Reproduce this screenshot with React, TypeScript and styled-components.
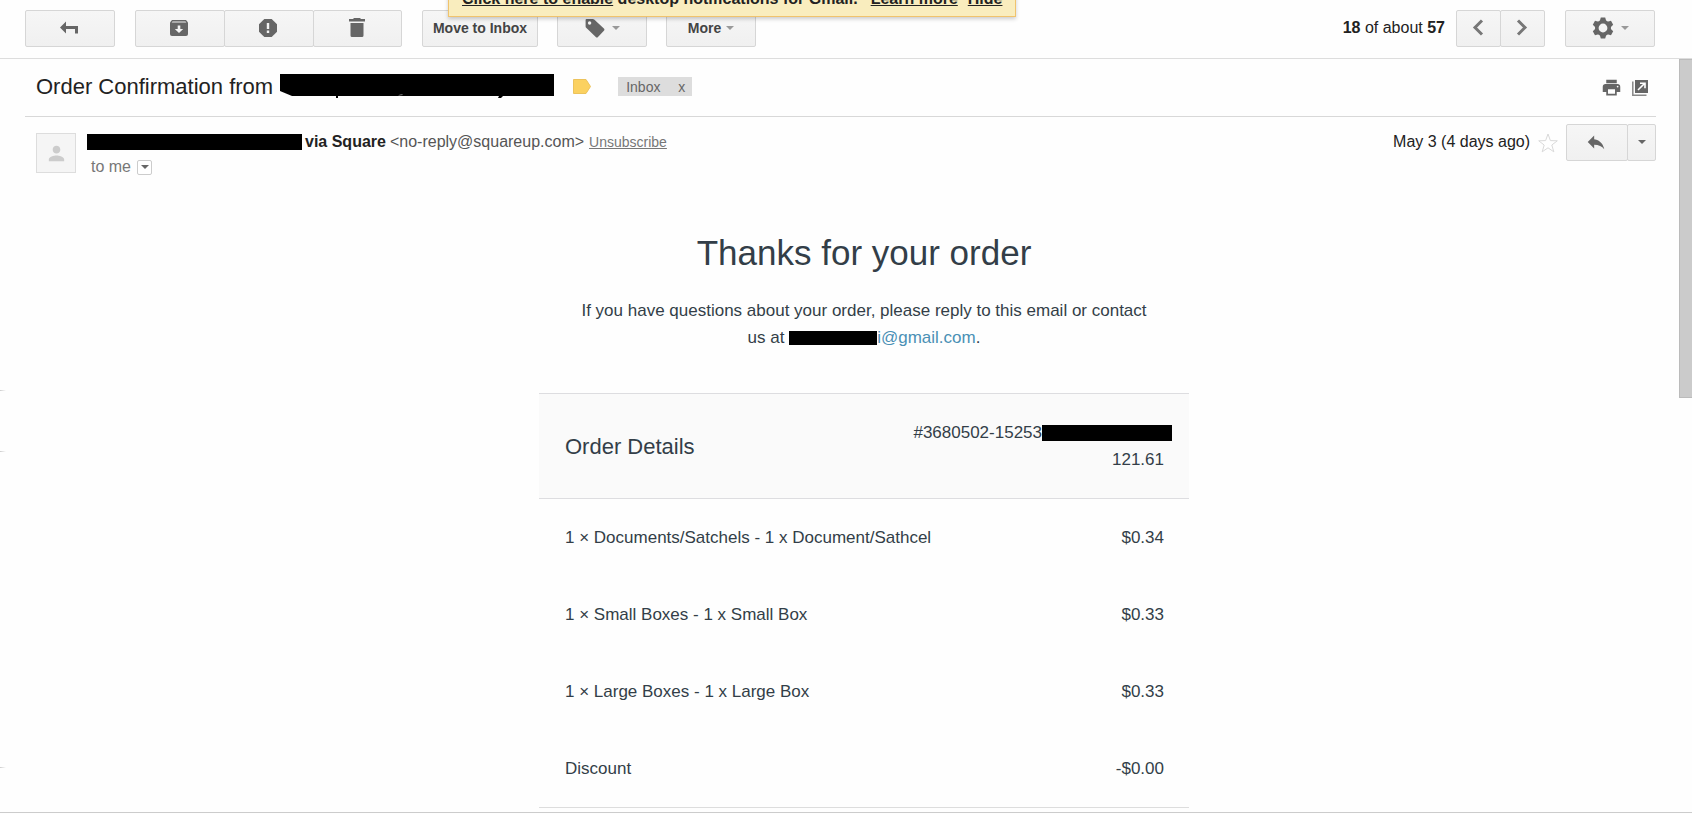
import React from "react";
import styled, { createGlobalStyle } from "styled-components";
import { MdPerson, MdPrint, MdReply } from "react-icons/md";

const GlobalStyle = createGlobalStyle`
  *, *::before, *::after { box-sizing: border-box; }
  body {
    margin: 0;
    background: #fefefe;
    color: #222;
    font-family: "Liberation Sans", Arial, sans-serif;
    font-size: 16px;
    line-height: 20px;
  }
  button { font-family: inherit; }
`;

const Page = styled.div`
  position: relative;
  display: flex;
  flex-direction: column;
  height: 100vh;
  overflow: hidden;
  padding-bottom: 1px;
`;

const Notice = styled.div`
  position: absolute;
  z-index: 2;
  top: -14px;
  left: 448px;
  display: flex;
  gap: 13px;
  padding: 2px 13px 7px;
  border: 1px solid #f0c36d;
  background: #f9edbe;
  box-shadow: 0 2px 4px rgba(0, 0, 0, 0.2);
  font-weight: bold;
  white-space: nowrap;

  a { color: #222; }
`;

const NoticeLinks = styled.span`
  display: flex;
  gap: 10px;
`;

const Toolbar = styled.header`
  display: flex;
  flex: none;
  align-items: center;
  gap: 20px;
  padding: 10px 37px 11px 25px;
  border-bottom: 1px solid #ddd;
`;

const Group = styled.div`
  display: flex;
`;

const Button = styled.button<{ $width: number }>`
  display: flex;
  align-items: center;
  justify-content: center;
  gap: 5px;
  width: ${(p) => p.$width}px;
  height: 37px;
  padding: 0 0 2px;
  border: 1px solid #d6d6d6;
  border-radius: 2px;
  background: linear-gradient(#f6f6f6, #f0f0f0);
  color: #444;
  font-size: 14px;
  font-weight: bold;
  white-space: nowrap;

  & + & {
    margin-left: -1px;
  }

  svg { flex: none; margin-right: 2px; }
`;

const Caret = styled.span<{ $dark?: boolean }>`
  border: 4px solid transparent;
  border-top-color: ${(p) => (p.$dark ? "#666" : "#999")};
  border-bottom: 0;
`;

const Pager = styled.div`
  display: flex;
  align-items: center;
  gap: 11px;
  margin-left: auto;
`;

const Position = styled.span`
  padding-bottom: 2px;
`;

const Pane = styled.div`
  position: relative;
  display: flex;
  flex: 1;
  min-height: 0;
  border-bottom: 1px solid #ccc;
`;

const Thread = styled.main`
  flex: 1;
  min-width: 0;
  overflow: hidden;
  padding: 0 23px 0 25px;
`;

const Track = styled.div`
  flex: none;
  width: 13px;
`;

const Thumb = styled.div`
  height: 45%;
  border: 1px solid #bbb;
  border-right: 0;
  background: #cbcbcb;
`;

const EdgeMark = styled.span<{ $top: string }>`
  position: absolute;
  left: 0;
  top: ${(p) => p.$top};
  width: 6px;
  height: 1px;
  background: linear-gradient(90deg, #ccc, #fefefe);
`;

const SubjectBar = styled.div`
  display: flex;
  align-items: center;
  height: 58px;
  padding: 0 8px 2px 11px;
  border-bottom: 1px solid #d8d8d8;
`;

const Subject = styled.h1`
  margin: 0 19px 0 0;
  display: flex;
  align-items: center;
  gap: 7px;
  font-size: 22px;
  line-height: 26px;
  font-weight: normal;
  white-space: nowrap;
`;

const Chip = styled.span`
  display: flex;
  align-items: center;
  justify-content: space-between;
  width: 74px;
  height: 19px;
  margin-left: 27px;
  padding: 0 7px 0 8px;
  background: #ddd;
  color: #666;
  font-size: 14px;
`;

const PlainButton = styled.button`
  display: flex;
  align-items: center;
  padding: 0;
  border: 0;
  background: none;
  color: #666;
  font-size: inherit;
`;

const SubjectTools = styled.div`
  display: flex;
  align-items: center;
  gap: 10px;
  margin-left: auto;
  padding-top: 2px;
`;

const MessageHeader = styled.div`
  display: flex;
  align-items: flex-start;
  padding: 7px 0 0 11px;
`;

const Avatar = styled.span`
  display: flex;
  align-items: center;
  justify-content: center;
  width: 40px;
  height: 40px;
  margin: 9px 11px 0 0;
  border: 1px solid #ddd;
  background: #f5f5f5;
  color: #ccc;
`;

const SenderInfo = styled.div`
  flex: 1;
  padding-top: 8px;
  white-space: nowrap;
`;

const SenderLine = styled.div`
  display: flex;
  align-items: center;
  color: #555;

  strong { margin: 0 4px 0 3px; color: #222; }
  a { margin-left: 5px; color: #777; font-size: 14px; }
`;

const Recipient = styled.div`
  display: flex;
  align-items: center;
  gap: 6px;
  padding: 5px 0 0 4px;
  color: #777;
`;

const DetailsButton = styled.button`
  display: flex;
  align-items: center;
  justify-content: center;
  width: 15px;
  height: 15px;
  padding: 0;
  border: 1px solid #ccc;
  border-radius: 2px;
  background: #fff;
`;

const MessageTools = styled.div`
  display: flex;
  align-items: center;
  gap: 8px;

  time { padding-bottom: 2px; }
`;

const Redacted = styled.span<{ $width: number; $height: number }>`
  display: inline-block;
  flex: none;
  width: ${(p) => p.$width}px;
  height: ${(p) => p.$height}px;
  background: #000;
`;

const Body = styled.article`
  padding: 0 15px 0 62px;
  color: #333e48;
  font-size: 17px;
  line-height: 27px;
`;

const Receipt = styled.div`
  max-width: 650px;
  margin: 0 auto;
`;

const Title = styled.h2`
  margin: 0;
  padding-top: 55px;
  font-size: 35px;
  line-height: 42px;
  font-weight: normal;
  text-align: center;
`;

const Contact = styled.p`
  margin: 0 auto;
  padding: 23px 0 42px;
  max-width: 582px;
  text-align: center;

  a { color: #4a90b5; text-decoration: none; }
  ${Redacted} { vertical-align: -2px; }
`;

const OrderSummary = styled.div`
  display: flex;
  align-items: center;
  justify-content: space-between;
  height: 106px;
  padding: 0 25px 0 26px;
  border: solid #dddde0;
  border-width: 1px 0;
  background: #fafafa;
  text-align: right;
`;

const SummaryTitle = styled.h3`
  margin: 0;
  font-size: 22px;
  font-weight: normal;
`;

const OrderNumber = styled.div`
  display: flex;
  align-items: center;
  justify-content: flex-end;
  margin-right: -8px;
`;

const Items = styled.table`
  width: 100%;
  border-collapse: collapse;
  border-bottom: 1px solid #ddd;

  td {
    height: 77px;
    padding: 0 25px 0 26px;
  }
  td:last-child { text-align: right; }
`;

const items = [
  ["1 × Documents/Satchels - 1 x Document/Sathcel", "$0.34"],
  ["1 × Small Boxes - 1 x Small Box", "$0.33"],
  ["1 × Large Boxes - 1 x Large Box", "$0.33"],
  ["Discount", "-$0.00"],
];

const BackIcon = () => (
  <svg width="18" height="14" viewBox="0 0 18 14" fill="#666">
    <path d="M0 6.5 6 0.5V5h12v7.5h-3V8H6v4.5z" />
  </svg>
);

const ArchiveIcon = () => (
  <svg width="18" height="16" viewBox="0 0 18 16">
    <path d="M2 0h14l2 2.5V14a2 2 0 0 1-2 2H2a2 2 0 0 1-2-2V2.5z" fill="#666" />
    <path d="M2.5 1.5h13l.8 1H1.7z" fill="#eee" />
    <path d="M7.7 5.5h2.6V9h2.9L9 13 4.800 9h2.900z" fill="#f4f4f4" />
  </svg>
);

const SpamIcon = () => (
  <svg width="18" height="18" viewBox="0 0 18 18">
    <path d="M5.300 0h7.400L18 5.300v7.400L12.700 18H5.300L0 12.700V5.300z" fill="#666" />
    <path d="M7.800 4h2.400v6H7.800zM7.800 11.500h2.400v2.400H7.800z" fill="#f4f4f4" />
  </svg>
);

const TrashIcon = () => (
  <svg width="16" height="19" viewBox="0 0 16 19" fill="#666">
    <path d="M5 0h6l1 1h4v2.500H0V1h4zM1.500 5h13v12.500a1.500 1.500 0 0 1-1.500 1.500H3a1.500 1.500 0 0 1-1.500-1.500z" />
  </svg>
);

const TagIcon = () => (
  <svg width="20" height="20" viewBox="0 0 20 20">
    <path d="M1.500 1h6.300c.6 0 1 .2 1.400.6l9.700 9c.7.700.7 1.500 0 2.200L13 18.900c-.7.7-1.500.7-2.200 0L1.200 9.800C.8 9.400.6 9 .6 8.400V2c0-.6.3-1 .9-1z" fill="#666" />
    <circle cx="4.600" cy="5" r="1.700" fill="#f4f4f4" />
  </svg>
);

const ChevronIcon = ({ next }: { next?: boolean }) => (
  <svg width="12" height="17" viewBox="0 0 12 17" fill="none" stroke="#777" strokeWidth="3">
    <path d={next ? "M2 1.500 9 8.500 2 15.500" : "M10 1.500 3 8.500 10 15.500"} />
  </svg>
);

const GearIcon = () => (
  <svg width="22" height="22" viewBox="-11 -11 22 22" fill="#666">
    {[0, 60, 120].map((angle) => (
      <path
        key={angle}
        d="M-2.200-10.500h4.400L3.500-6h-7zM-2.200 10.500h4.400L3.500 6h-7z"
        transform={`rotate(${angle})`}
      />
    ))}
    <circle r="6.200" fill="none" stroke="#666" strokeWidth="3.600" />
  </svg>
);

const LabelMarkerIcon = () => (
  <svg width="18" height="15" viewBox="0 0 18 15">
    <path d="M.5.500h12.500L17.500 7.500 13 14.500H.5z" fill="#fbd160" stroke="#ecc35c" />
  </svg>
);

const PopOutIcon = () => (
  <svg width="16" height="16" viewBox="0 0 16 16">
    <path d="M3 0h13v13H3z" fill="#666" />
    <path d="M.8 1.500v13.700h13.700" fill="none" stroke="#888" strokeWidth="1.500" />
    <path d="M6 10l6.500-6.500M8 3.200h5v5" fill="none" stroke="#fff" strokeWidth="1.600" />
  </svg>
);

const StarIcon = () => (
  <svg width="20" height="20" viewBox="0 0 20 20" fill="#fff" stroke="#d9d9d9">
    <path d="M10 1l2.400 6.600 6.900.2-5.500 4.200 2 6.800L10 14.800 4.200 18.800l2-6.800L.7 7.800l6.900-.2z" />
  </svg>
);

/* The marker stroke over the shop name leaves a few letter tails uncovered. */
const SubjectRedaction = () => (
  <svg width="274" height="26" viewBox="0 0 274 26">
    <path d="M0 0h274v22H12L0 17z" />
    <path d="M56 22h2v2h-2zM219 22h4l-2 2h-3z" />
    <path d="M118 21.500c2-1.200 4-1.200 5-.5z" fill="#bbb" />
  </svg>
);

export default function App() {
  return (
    <Page>
      <GlobalStyle />
      <Notice>
        <span>
          <a href="#enable">Click here to enable</a> desktop notifications for Gmail.
        </span>
        <NoticeLinks>
          <a href="#learn">Learn more</a>
          <a href="#hide">Hide</a>
        </NoticeLinks>
      </Notice>

      <Toolbar>
        <Button $width={90} aria-label="Back"><BackIcon /></Button>
        <Group>
          <Button $width={90} aria-label="Archive"><ArchiveIcon /></Button>
          <Button $width={90} aria-label="Report spam"><SpamIcon /></Button>
          <Button $width={89} aria-label="Delete"><TrashIcon /></Button>
        </Group>
        <Button $width={116}>Move to Inbox</Button>
        <Button $width={90} aria-label="Labels"><TagIcon /><Caret /></Button>
        <Button $width={90}>More<Caret /></Button>
        <Pager>
          <Position><b>18</b> of about <b>57</b></Position>
          <Group>
            <Button $width={45} aria-label="Newer"><ChevronIcon /></Button>
            <Button $width={45} aria-label="Older"><ChevronIcon next /></Button>
          </Group>
        </Pager>
        <Button $width={90} aria-label="Settings"><GearIcon /><Caret /></Button>
      </Toolbar>

      <Pane>
        <EdgeMark $top="44%" />
        <EdgeMark $top="52%" />
        <EdgeMark $top="94%" />
        <Thread>
          <SubjectBar>
            <Subject>
              Order Confirmation from
              <SubjectRedaction />
            </Subject>
            <LabelMarkerIcon />
            <Chip>
              Inbox
              <PlainButton aria-label="Remove label Inbox">x</PlainButton>
            </Chip>
            <SubjectTools>
              <PlainButton aria-label="Print all"><MdPrint size={21} /></PlainButton>
              <PlainButton aria-label="In new window"><PopOutIcon /></PlainButton>
            </SubjectTools>
          </SubjectBar>

          <MessageHeader>
            <Avatar><MdPerson size={23} /></Avatar>
            <SenderInfo>
              <SenderLine>
                <Redacted $width={215} $height={16} />
                <strong>via Square</strong>
                &lt;no-reply@squareup.com&gt;
                <a href="#unsubscribe">Unsubscribe</a>
              </SenderLine>
              <Recipient>
                to me
                <DetailsButton aria-label="Show details"><Caret $dark /></DetailsButton>
              </Recipient>
            </SenderInfo>
            <MessageTools>
              <time>May 3 (4 days ago)</time>
              <PlainButton aria-label="Star"><StarIcon /></PlainButton>
              <Group>
                <Button $width={62} aria-label="Reply"><MdReply size={22} color="#666" /></Button>
                <Button $width={29} aria-label="More options"><Caret $dark /></Button>
              </Group>
            </MessageTools>
          </MessageHeader>

          <Body>
            <Receipt>
              <Title>Thanks for your order</Title>
              <Contact>
                If you have questions about your order, please reply to this email or contact us at{" "}
                <Redacted $width={88} $height={14} />
                <a href="#contact">i@gmail.com</a>.
              </Contact>
              <OrderSummary>
                <SummaryTitle>Order Details</SummaryTitle>
                <div>
                  <OrderNumber>
                    #3680502-15253
                    <Redacted $width={130} $height={16} />
                  </OrderNumber>
                  121.61
                </div>
              </OrderSummary>
              <Items>
                <tbody>
                  {items.map(([name, price]) => (
                    <tr key={name}>
                      <td>{name}</td>
                      <td>{price}</td>
                    </tr>
                  ))}
                </tbody>
              </Items>
            </Receipt>
          </Body>
        </Thread>
        <Track><Thumb /></Track>
      </Pane>
    </Page>
  );
}
